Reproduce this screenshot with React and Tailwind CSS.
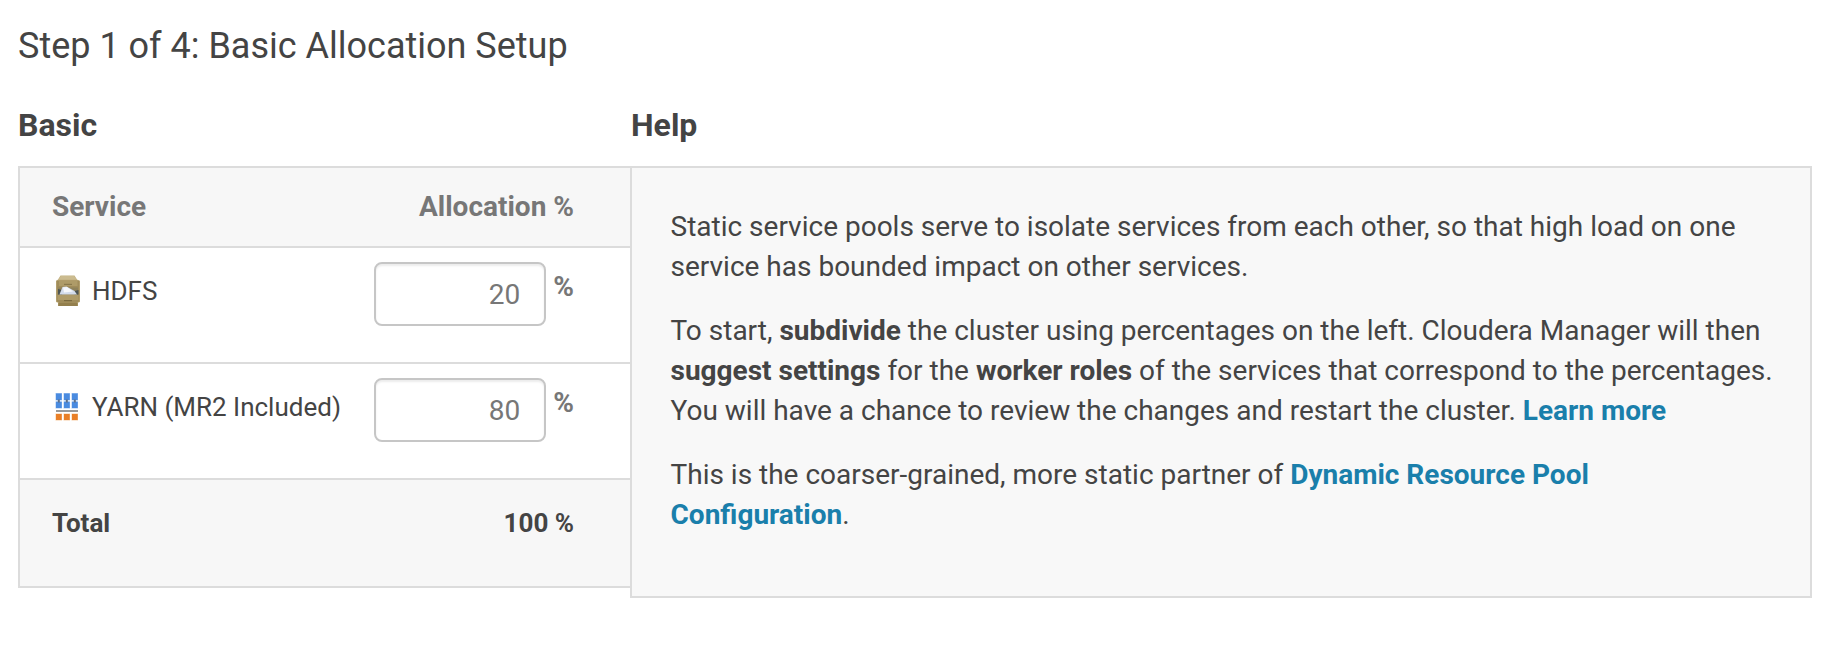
function HdfsIcon() {
  return (
    <svg width="30" height="36" viewBox="0 0 30 36" className="shrink-0">
      <path d="M8.500 0.500h14l2.500 4 3 1.500v21l-2 .8V31H6v-3.200l-2-.8V6l2-1.500z" fill="#c2b180" />
      <path d="M9 1h13l2.500 3.500H6.500z" fill="#cbbb8f" />
      <path d="M4.500 5.500h23v21l-2 .8V31H6.500v-3.700l-2-.8z" fill="#a08c5a" />
      <path d="M7 5.500h18.500v5.500H7z" fill="#ae9b68" />
      <path d="M12 8.800h8v1.200h-8z" fill="#8a794d" />
      <path d="M6 12.500h20v7H6z" fill="#8f825b" />
      <path d="M6 14l4 1v4.500H6zM26.500 15l-4 1v3.500h4z" fill="#4d5554" />
      <path d="M7.500 19.500l3-7.500 4-.5 8 4.500 2.500 3.500z" fill="#d3dcec" />
      <path d="M11 12.500l4-.5 6 4.500-9 1z" fill="#f6f8fc" />
      <path d="M5.500 20h21v5h-21z" fill="#ae9b69" />
      <path d="M12 25h8v1.200h-8z" fill="#7a693f" />
      <path d="M6.500 28h19v3h-19z" fill="#937f4d" />
    </svg>
  );
}

function YarnIcon() {
  return (
    <svg width="30" height="36" viewBox="0 0 30 36" className="shrink-0">
      {[4, 12, 20].map((x) => (
        <g key={x}>
          <rect x={x - 0.500} y="2" width="6.500" height="7.500" fill="#a9c7f0" />
          <rect x={x - 0.500} y="10.500" width="6.500" height="7" fill="#a9c7f0" />
          <rect x={x} y="2.500" width="5.700" height="6.500" fill="#4a8be0" />
          <rect x={x} y="10.700" width="5.700" height="6.300" fill="#4a8be0" />
          <rect x={x + 1.800} y="8.500" width="2" height="3" fill="#5f6f86" />
          <rect x={x - 0.500} y="22.500" width="6.500" height="7" fill="#f7cda6" />
          <rect x={x} y="23" width="5.700" height="6" fill="#e97f27" />
        </g>
      ))}
      <rect x="4" y="19" width="22" height="2" fill="#999" />
    </svg>
  );
}

function ServiceRow({ icon, name, value }) {
  return (
    <div className="flex h-[116px] items-start border-b-2 border-[#dcdcdc] pl-8 pr-14">
      <div className="flex grow items-start pt-[27px]">
        {icon}
        <span className="-mt-0.5 ml-[10px] text-[26px] leading-[36px]">{name}</span>
      </div>
      <div className="flex pt-[14px]">
        <input
          className="h-16 w-[172px] rounded-lg border-2 border-[#c6c6c6] bg-white px-6 text-right text-[28px] text-[#777] shadow-[inset_0_2px_2px_rgba(0,0,0,0.075)] outline-none"
          defaultValue={value}
          aria-label={name}
        />
        <span className="ml-[7px] mt-[5px] text-[28px] font-bold leading-[40px] text-[#777]">%</span>
      </div>
    </div>
  );
}

function Link({ children }) {
  return <a href="#" className="font-bold text-[#1a7fab]">{children}</a>;
}

export default function App() {
  return (
    <main className="h-[656px] bg-white px-[18px] pt-[22px] font-[Roboto,sans-serif] text-[#444]">
      <h1 className="text-[36px] leading-[48px]">Step 1 of 4: Basic Allocation Setup</h1>
      <div className="mt-[35px] flex items-start">
        <section className="w-[612px]">
          <h2 className="text-[32px] font-bold leading-[40px]">Basic</h2>
          <div className="mt-[21px] border-l-2 border-t-2 border-[#dcdcdc]">
            <div className="flex h-20 items-center justify-between border-b-2 border-[#dcdcdc] bg-[#f7f7f7] pl-8 pr-14 text-[28px] font-bold text-[#777]">
              <span>Service</span>
              <span>Allocation %</span>
            </div>
            <ServiceRow icon={<HdfsIcon />} name="HDFS" value="20" />
            <ServiceRow icon={<YarnIcon />} name="YARN (MR2 Included)" value="80" />
            <div className="flex h-[108px] justify-between border-b-2 border-[#dcdcdc] bg-[#f7f7f7] pl-8 pr-14 pt-[23px] text-[26px] font-bold leading-[40px]">
              <span>Total</span>
              <span>100 %</span>
            </div>
          </div>
        </section>
        <section className="w-[1182px]">
          <h2 className="pl-px text-[32px] font-bold leading-[40px]">Help</h2>
          <div className="mt-[21px] h-[432px] space-y-6 whitespace-nowrap border-2 border-[#dcdcdc] bg-[#f8f8f8] px-[38.5px] pt-[39px] text-[28px] leading-[40px]">
            <p>
              Static service pools serve to isolate services from each other, so that high load on one
              <br />
              service has bounded impact on other services.
            </p>
            <p>
              To start, <b>subdivide</b> the cluster using percentages on the left. Cloudera Manager will then
              <br />
              <b>suggest settings</b> for the <b>worker roles</b> of the services that correspond to the percentages.
              <br />
              You will have a chance to review the changes and restart the cluster. <Link>Learn more</Link>
            </p>
            <p>
              This is the coarser-grained, more static partner of <Link>Dynamic Resource Pool</Link>
              <br />
              <Link>Configuration</Link>.
            </p>
          </div>
        </section>
      </div>
    </main>
  );
}
